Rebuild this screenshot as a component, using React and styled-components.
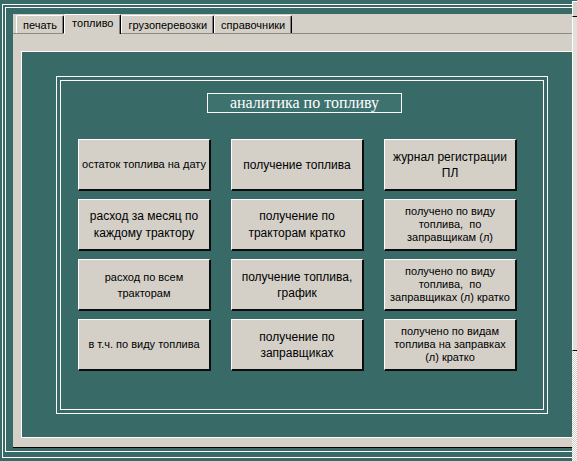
import React from 'react';
import styled, { createGlobalStyle } from 'styled-components';

const Global = createGlobalStyle`
  html, body {
    margin: 0;
    padding: 0;
    background: #386a67;
  }
`

const Window = styled.div`
  display: flex;
  width: 577px;
  height: 461px;
  overflow: hidden;
  background: #386a67;
`
const Main = styled.div`
  flex: 0 0 572px;
  padding: 4px 0 0 2px;
  box-sizing: border-box;
`
const Ring = styled.div`
  border: 1px solid #fff;
  border-right: none;
  padding: ${({$pad}) => $pad};
`
const Sheet = styled.div`
  box-sizing: border-box;
  height: 434px;
  background: #d4d0c8;
  border-bottom: 1px solid #000;
  display: flex;
  flex-direction: column;
`
const TabStrip = styled.div`
  box-sizing: border-box;
  flex: 0 0 20px;
  display: flex;
  align-items: flex-end;
  padding-left: 3px;
  border-bottom: 1px solid #8a8a8a;
`
const Tab = styled.div`
  box-sizing: border-box;
  position: relative;
  height: ${({$active}) => $active ? '20px' : '18px'};
  margin-bottom: ${({$active}) => $active ? '-1px' : '0'};
  padding: ${({$active}) => $active ? '2px 7px 0' : '0 6px'};
  display: flex;
  align-items: ${({$active}) => $active ? 'flex-start' : 'center'};
  background: #d4d0c8;
  border-top: 1px solid #fff;
  border-left: 1px solid #fff;
  border-right: 1px solid #000;
  box-shadow: inset -1px 0 #808080;
  border-radius: 2px 2px 0 0;
  z-index: ${({$active}) => $active ? 1 : 0};
  font-family: "Liberation Sans", Arial, sans-serif;
  font-size: 11px;
  color: #000;
  white-space: nowrap;
`
const Page = styled.div`
  flex: 1;
  display: flex;
  padding: 17px 0 9px 8px;
`
const Pane = styled.div`
  flex: 1;
  background: #386a67;
  border: 1px solid #fff;
  border-right: none;
  padding: 24px 0 0 34px;
`
const Frame = styled.div`
  box-sizing: border-box;
  width: 492px;
  height: 338px;
  border: 1px solid #fff;
  padding: 3px;
`
const FrameInner = styled.div`
  box-sizing: border-box;
  height: 100%;
  border: 1px solid #fff;
  display: flex;
  flex-direction: column;
  align-items: center;
  padding-top: 12px;
`
const Title = styled.div`
  box-sizing: border-box;
  width: 195px;
  height: 20px;
  margin-left: 5px;
  border: 1px solid #fff;
  background: #3e726f;
  color: #fff;
  font-family: "Liberation Serif", "Times New Roman", serif;
  font-size: 16px;
  line-height: 18px;
  text-align: center;
`
const ButtonGrid = styled.div`
  align-self: flex-start;
  margin: 26px 0 0 17px;
  display: grid;
  grid-template-columns: repeat(3, 133px);
  grid-auto-rows: 52px;
  column-gap: 20px;
  row-gap: 8px;
`
const ReportButton = styled.button`
  box-sizing: border-box;
  display: flex;
  flex-direction: column;
  align-items: center;
  justify-content: center;
  padding: 0 3px;
  background: #d4d0c8;
  border-style: solid;
  border-width: 1px 2px 2px 1px;
  border-color: #fff #0c0c0c #0c0c0c #fff;
  font-family: "Liberation Sans", Arial, sans-serif;
  font-size: ${({$fs}) => $fs}px;
  line-height: ${({$lh}) => $lh}px;
  color: #000;
  text-align: center;
  cursor: default;
  span {
    white-space: pre;
  }
`
const ScrollBar = styled.div`
  flex: 0 0 16px;
  display: flex;
  flex-direction: column;
  padding-top: 1px;
`
const ArrowButton = styled.div`
  box-sizing: border-box;
  height: 16px;
  display: flex;
  align-items: center;
  justify-content: center;
  background: #d4d0c8;
  border: 1px solid;
  border-color: #fff #000 #000 #fff;
`
const Thumb = styled.div`
  box-sizing: border-box;
  height: 334px;
  background: #e2dfd9;
  border-left: 1px solid #fff;
  border-bottom: 1px solid #000;
`
const Track = styled.div`
  flex: 1;
  background: repeating-conic-gradient(#fff 0 25%, #d4d0c8 0 50%) 0 0 / 2px 2px;
`

const tabs = ['печать', 'топливо', 'грузоперевозки', 'справочники']

const buttons = [
  { lines: ['остаток топлива на дату'], fs: 11, lh: 13 },
  { lines: ['получение топлива'], fs: 12, lh: 16 },
  { lines: ['журнал регистрации', 'ПЛ'], fs: 12, lh: 16 },
  { lines: ['расход за месяц по', 'каждому трактору'], fs: 12, lh: 17 },
  { lines: ['получение по', 'тракторам кратко'], fs: 12, lh: 17 },
  { lines: ['получено по виду', 'топлива,  по', 'заправщикам (л)'], fs: 11, lh: 13 },
  { lines: ['расход по всем', 'тракторам'], fs: 11, lh: 16 },
  { lines: ['получение топлива,', 'график'], fs: 12, lh: 16 },
  { lines: ['получено по виду', 'топлива,  по', 'заправщиках (л) кратко'], fs: 11, lh: 13 },
  { lines: ['в т.ч. по виду топлива'], fs: 11, lh: 13 },
  { lines: ['получение по', 'заправщиках'], fs: 12, lh: 16 },
  { lines: ['получено по видам', 'топлива на заправках', '(л) кратко'], fs: 11, lh: 13 },
]

export default function App () {
  return (
    <Window>
      <Global />
      <Main>
        <Ring $pad="2px 0 5px 2px">
          <Ring $pad="6px 0 3px 7px">
            <Sheet>
              <TabStrip>
                {tabs.map(t => (
                  <Tab key={t} $active={t === 'топливо'}>{t}</Tab>
                ))}
              </TabStrip>
              <Page>
                <Pane>
                  <Frame>
                    <FrameInner>
                      <Title>аналитика по топливу</Title>
                      <ButtonGrid>
                        {buttons.map((b, i) => (
                          <ReportButton key={i} $fs={b.fs} $lh={b.lh}>
                            {b.lines.map((l, j) => <span key={j}>{l}</span>)}
                          </ReportButton>
                        ))}
                      </ButtonGrid>
                    </FrameInner>
                  </Frame>
                </Pane>
              </Page>
            </Sheet>
          </Ring>
        </Ring>
      </Main>
      <ScrollBar>
        <ArrowButton>
          <svg width="7" height="4" viewBox="0 0 7 4">
            <path d="M3.5 0 L7 4 L0 4 Z" fill="#000" />
          </svg>
        </ArrowButton>
        <Thumb />
        <Track />
      </ScrollBar>
    </Window>
  )
}
